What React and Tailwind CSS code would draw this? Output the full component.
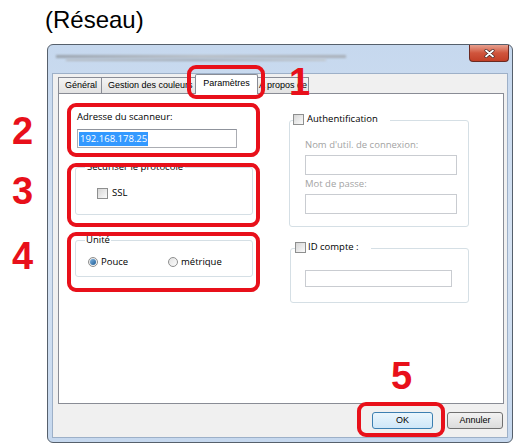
const ui = "font-['Open_Sans',sans-serif] text-[9.5px] leading-[12px]"

function CheckBox() {
  return (
    <span className="inline-block w-[11px] h-[11px] border border-[#8e8f8f] bg-gradient-to-br from-[#d6d6d6] to-[#fbfbfb] shrink-0" />
  )
}

function Radio({ checked }) {
  return (
    <span className="w-[10px] h-[10px] rounded-full border border-[#8e8f8f] bg-gradient-to-br from-[#e2e2e2] to-[#fcfcfc] flex items-center justify-center shrink-0">
      {checked && <span className="w-[6px] h-[6px] rounded-full bg-gradient-to-br from-[#7fb6e4] to-[#1d5d95]" />}
    </span>
  )
}

function Field({ className = '', children, disabled }) {
  return (
    <div className={`bg-white border ${disabled ? 'border-[#c9ccd1]' : 'border-[#abadb3] border-t-[#8f939c]'} flex items-center ${className}`}>
      {children}
    </div>
  )
}

function Tab({ label, w, active }) {
  if (active) {
    return (
      <div className={`${w} h-[20px] -mb-[1px] relative z-10 bg-white border border-[#898c95] border-b-0 rounded-t-[2px] flex items-center justify-center pb-[2px] text-[9px]`}>
        {label}
      </div>
    )
  }
  return (
    <div className={`${w} h-[16px] bg-gradient-to-b from-[#f4f4f4] to-[#e2e2e2] border border-[#898c95] border-b-0 border-r-0 flex items-center pl-[6px] overflow-hidden whitespace-nowrap text-[9px]`}>
      {label}
    </div>
  )
}

function Mark({ className }) {
  return <div className={`absolute border-4 border-[#e8101a] rounded-[9px] ${className}`} />
}

function Num({ n, className }) {
  return (
    <div className={`absolute text-[38px] leading-[38px] font-bold text-[#e8101a] font-['Liberation_Sans',Arial,sans-serif] ${className}`}>
      {n}
    </div>
  )
}

export default function App() {
  return (
    <div className="w-[521px] h-[445px] bg-white relative overflow-hidden font-['Liberation_Sans',Arial,sans-serif] text-black">
      <div className="h-[44px] pl-[45px] pt-[5px] text-[24px] leading-[30px]">(Réseau)</div>

      {/* window */}
      <div className="ml-[47px] w-[466px] h-[399px] rounded-[6px] border border-[#56606c] bg-gradient-to-b from-[#c6d8ee] via-[#d6e3f3] to-[#c6d8ee] flex flex-col px-[4px] pb-[4px]">
        <div className="h-[28px] flex items-start shrink-0">
          <div className="mt-[10px] ml-[4px] flex flex-col gap-[1px]">
            <div className="w-[290px] h-[3px] bg-gradient-to-r from-[#9aa3ad] via-[#b7bdc4] to-[#a8afb8] blur-[1px]" />
            <div className="w-[260px] h-[2px] ml-[10px] bg-gradient-to-r from-[#b4bac1] via-[#9ea6af] to-[#c0c6cc] blur-[1px]" />
          </div>
          <div className="ml-auto mr-[-1px] w-[40px] h-[17px] rounded-b-[4px] border border-t-0 border-[#6b2a22] bg-gradient-to-b from-[#e6a08f] via-[#d0543c] to-[#c23f27] flex items-center justify-center">
            <svg width="11" height="9" viewBox="0 0 11 9">
              <path d="M2 1.5 L9 7.5 M9 1.5 L2 7.5" stroke="#3a2020" strokeWidth="3" strokeLinecap="round" />
              <path d="M2 1.5 L9 7.5 M9 1.5 L2 7.5" stroke="#ffffff" strokeWidth="1.8" strokeLinecap="round" />
            </svg>
          </div>
        </div>

        {/* client */}
        <div className="h-[365px] border border-[#9db0c8] bg-[#f0f0f0] flex flex-col pl-[5px] pr-[3px]">
          <div className="h-[19px] flex items-end shrink-0">
            <Tab label="Général" w="w-[43px]" />
            <Tab label="Gestion des couleurs" w="w-[94px]" />
            <Tab label="Paramètres" w="w-[63px]" active />
            <div className="w-[51px] h-[16px] bg-gradient-to-b from-[#f4f4f4] to-[#e2e2e2] border border-[#898c95] border-b-0 border-l-0 flex items-center pl-[1px] overflow-hidden whitespace-nowrap text-[9px]">
              A propos de
            </div>
          </div>

          <div className={`h-[311px] bg-white border border-[#898c95] flex ${ui}`}>
            {/* left column */}
            <div className="ml-[16px] w-[178px] flex flex-col">
              <div className="mt-[17px] ml-[2px]">Adresse du scanneur:</div>
              <Field className="mt-[6px] ml-[2px] w-[160px] h-[19px] pl-[1px]">
                <span className="bg-[#3399ff] text-white px-[1px] leading-[14px]">192.168.178.25</span>
              </Field>

              <fieldset className="mt-[13px] h-[54px] border border-[#d5dfe5] rounded-[3px]">
                <legend className="ml-[9px] px-[2px]">Sécuriser le protocole</legend>
                <div className="mt-[14px] ml-[21px] flex items-center gap-[4px]">
                  <CheckBox />
                  <span>SSL</span>
                </div>
              </fieldset>

              <fieldset className="mt-[19px] h-[43px] border border-[#d5dfe5] rounded-[3px]">
                <legend className="ml-[9px] px-[1px]">Unité</legend>
                <div className="mt-[10px] ml-[12px] flex items-center">
                  <div className="w-[80px] flex items-center gap-[3px]">
                    <Radio checked />
                    <span>Pouce</span>
                  </div>
                  <div className="flex items-center gap-[3px]">
                    <Radio />
                    <span>métrique</span>
                  </div>
                </div>
              </fieldset>
            </div>

            {/* right column */}
            <div className="ml-[36px] w-[180px] flex flex-col">
              <fieldset className="mt-[19px] h-[114px] border border-[#d5dfe5] rounded-[3px]">
                <legend className="ml-[3px] pr-[12px]">
                  <span className="inline-flex items-center gap-[3px]">
                    <CheckBox />
                    <span>Authentification</span>
                  </span>
                </legend>
                <div className="mt-[11px] ml-[15px] text-[#a3a3a3]">Nom d'util. de connexion:</div>
                <Field disabled className="mt-[4px] ml-[15px] w-[152px] h-[20px]" />
                <div className="mt-[3px] ml-[15px] text-[#a3a3a3]">Mot de passe:</div>
                <Field disabled className="mt-[4px] ml-[15px] w-[152px] h-[20px]" />
              </fieldset>

              <fieldset className="mt-[14px] ml-[1px] h-[62px] border border-[#d5dfe5] rounded-[3px]">
                <legend className="ml-[4px] pr-[12px]">
                  <span className="inline-flex items-center gap-[2px]">
                    <CheckBox />
                    <span>ID compte :</span>
                  </span>
                </legend>
                <Field disabled className="mt-[14px] ml-[14px] w-[147px] h-[17px]" />
              </fieldset>
            </div>
          </div>

          <div className="flex-1 flex items-start justify-end pt-[8px] pr-[1px] gap-[14px] text-[9px]">
            <button className="w-[61px] h-[17px] rounded-[3px] border border-[#3c7fb1] bg-gradient-to-b from-[#eaf6fd] to-[#cfe7f8] flex items-center justify-center">
              OK
            </button>
            <button className="w-[56px] h-[17px] rounded-[3px] border border-[#707070] bg-gradient-to-b from-[#f2f2f2] to-[#dcdcdc] flex items-center justify-center">
              Annuler
            </button>
          </div>
        </div>
      </div>

      {/* annotations */}
      <Mark className="left-[187px] top-[65px] w-[78px] h-[34px]" />
      <Mark className="left-[67px] top-[103px] w-[193px] h-[54px]" />
      <Mark className="left-[67px] top-[163px] w-[193px] h-[64px]" />
      <Mark className="left-[67px] top-[232px] w-[193px] h-[60px]" />
      <Mark className="left-[357px] top-[402px] w-[88px] h-[35px]" />
      <Num n="1" className="left-[289px] top-[63px]" />
      <Num n="2" className="left-[12px] top-[112px]" />
      <Num n="3" className="left-[12px] top-[172px]" />
      <Num n="4" className="left-[12px] top-[237px]" />
      <Num n="5" className="left-[391px] top-[357px]" />
    </div>
  )
}
